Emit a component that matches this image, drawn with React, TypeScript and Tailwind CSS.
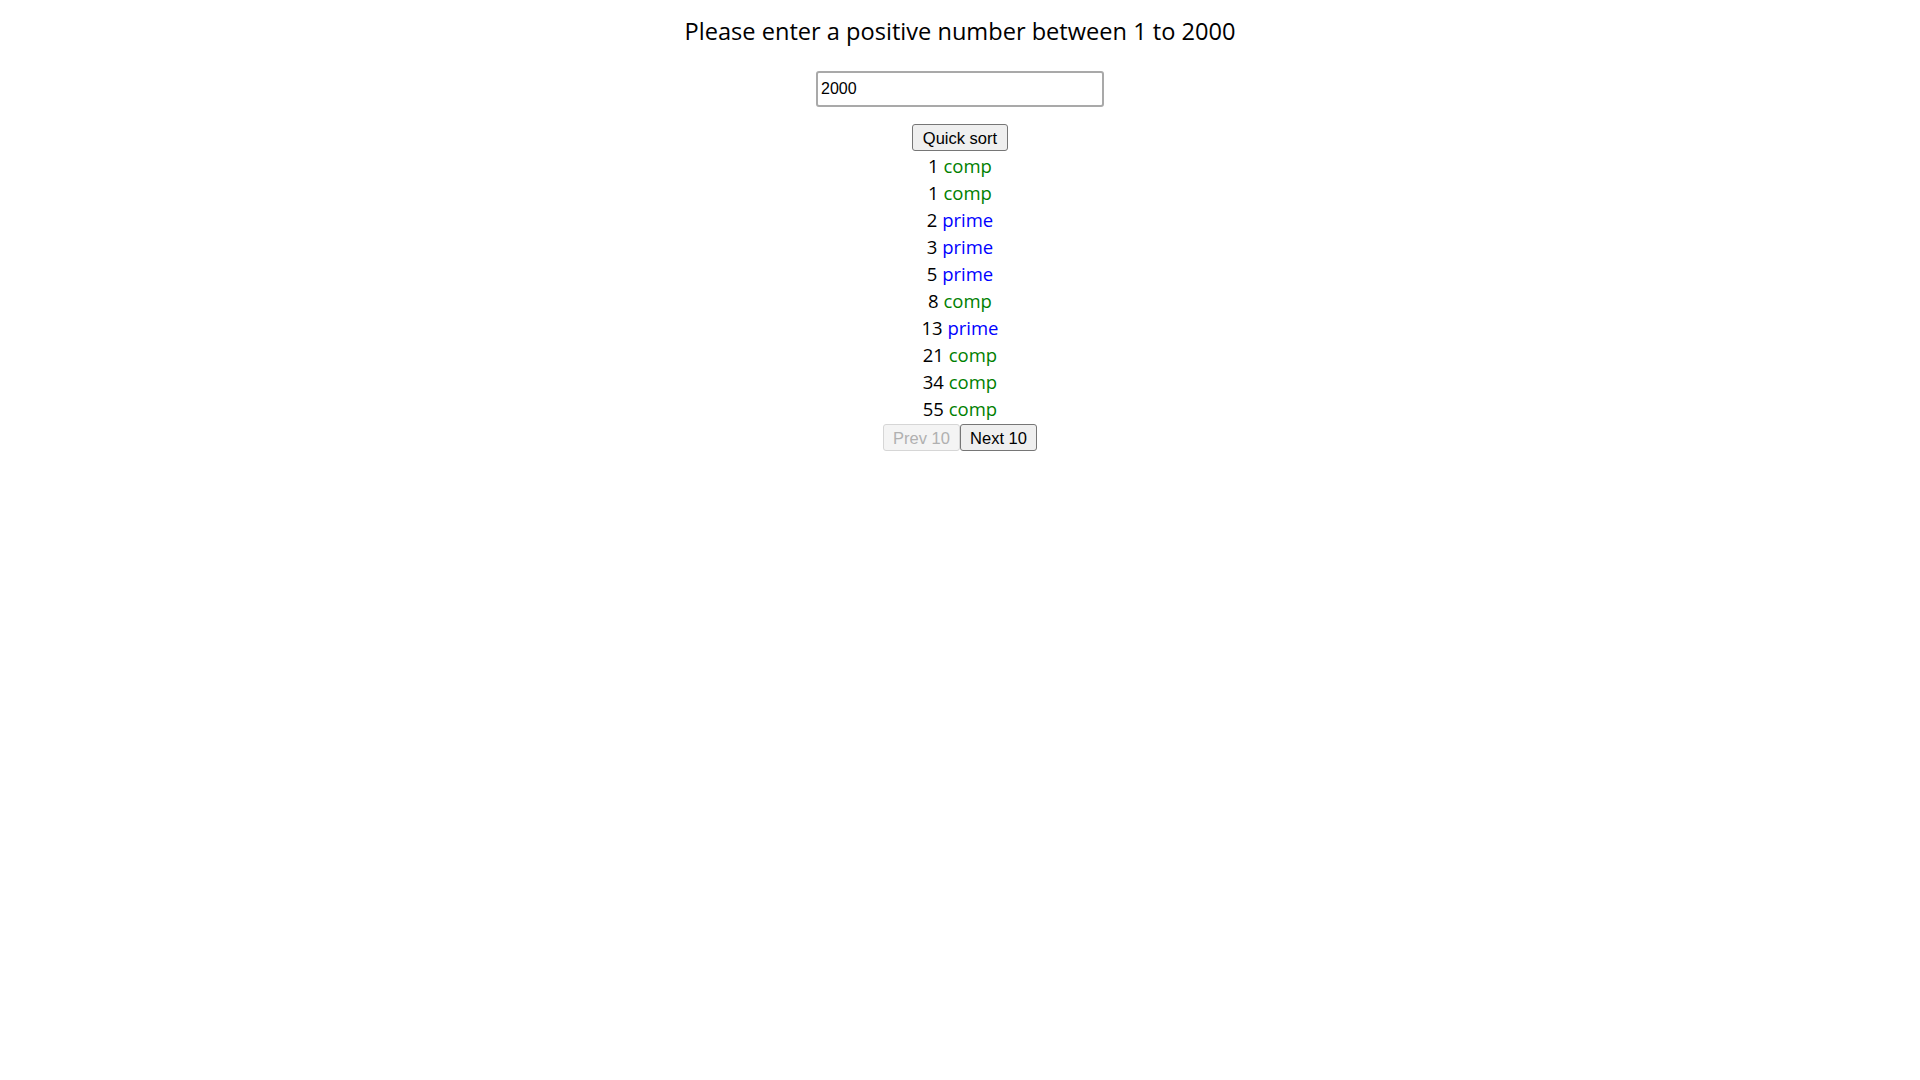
import React from "react";

const items: [number, boolean][] = [
  [1, false],
  [1, false],
  [2, true],
  [3, true],
  [5, true],
  [8, false],
  [13, true],
  [21, false],
  [34, false],
  [55, false],
];

export default function App() {
  return (
    <div className="min-h-screen bg-white flex flex-col items-center pt-[13px] text-black">
      <h1 className="text-[23.6px] leading-[36px] font-normal font-['Open_Sans',sans-serif]">
        Please enter a positive number between 1 to 2000
      </h1>
      <input
        type="text"
        defaultValue="2000"
        className="mt-[22px] w-[288px] h-[36px] border-2 border-[#a9a9a9] rounded-[3px] px-[3px] text-[16px] font-['Liberation_Sans',Arial,sans-serif] text-black outline-none"
      />
      <button className="mt-[17px] h-[27px] px-[10px] bg-[#efefef] border border-[#767676] rounded-[3px] text-[16.5px] leading-[18px] font-['Liberation_Sans',Arial,sans-serif] text-black">
        Quick sort
      </button>
      <div className="pt-[1px] flex flex-col items-center font-['Open_Sans',sans-serif] text-[18.5px] leading-[27px]">
        {items.map(([n, prime], i) => (
          <div key={i}>
            <span className="text-black">{n}</span>{" "}
            <span className={prime ? "text-[#0000ff]" : "text-[#008000]"}>
              {prime ? "prime" : "comp"}
            </span>
          </div>
        ))}
      </div>
      <div className="mt-[2px] flex">
        <button
          disabled
          className="h-[27px] w-[77px] bg-[#f4f4f4] border border-[#d6d6d6] rounded-[3px] text-[16.5px] leading-[18px] font-['Liberation_Sans',Arial,sans-serif] text-[#b0b0b0]"
        >
          Prev 10
        </button>
        <button className="h-[27px] w-[77px] bg-[#efefef] border border-[#767676] rounded-[3px] text-[16.5px] leading-[18px] font-['Liberation_Sans',Arial,sans-serif] text-black">
          Next 10
        </button>
      </div>
    </div>
  );
}
